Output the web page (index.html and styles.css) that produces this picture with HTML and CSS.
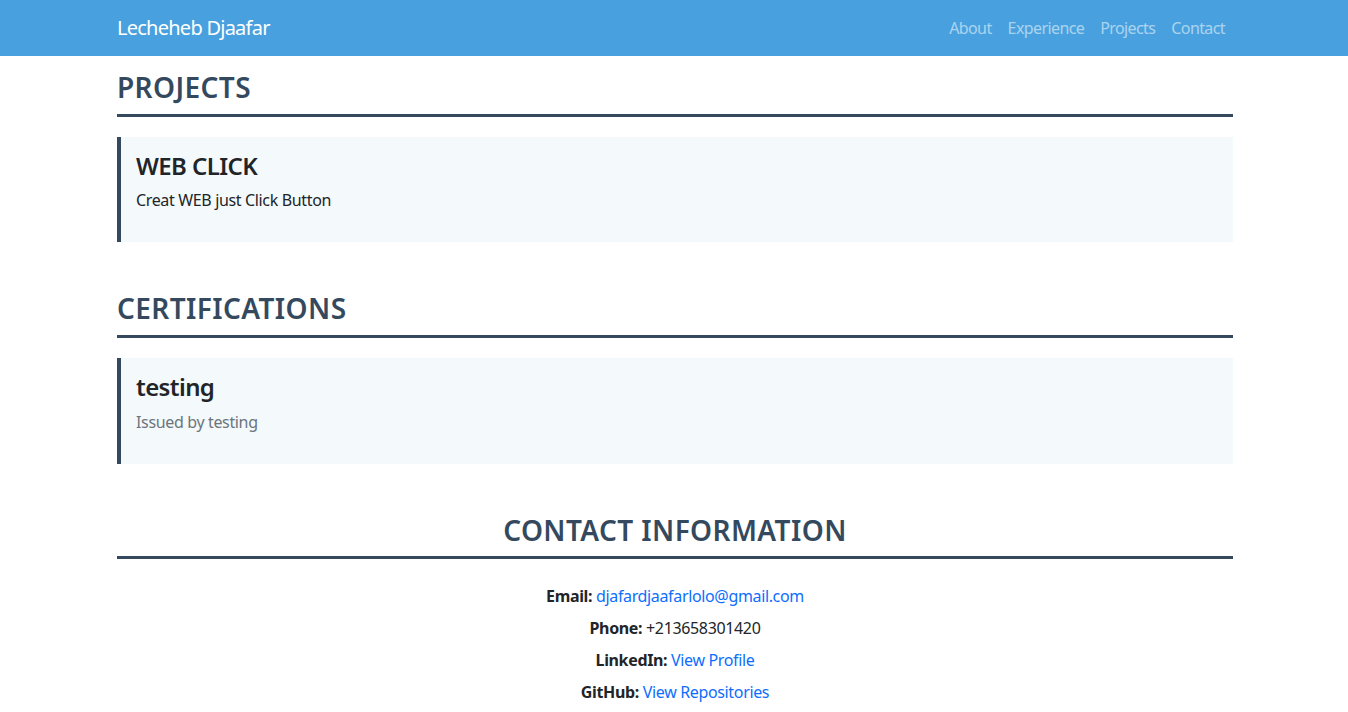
FILE: index.html
```html
<!DOCTYPE html>
<html lang="en">
<head>
<meta charset="utf-8">
<title>Lecheheb Djaafar</title>
<link rel="stylesheet" href="styles.css">
</head>
<body>
<nav class="navbar">
  <div class="container nav-inner">
    <a class="brand" href="#">Lecheheb Djaafar</a>
    <ul class="nav-links">
      <li><a href="#about">About</a></li>
      <li><a href="#experience">Experience</a></li>
      <li><a href="#projects">Projects</a></li>
      <li><a href="#contact">Contact</a></li>
    </ul>
  </div>
</nav>
<main class="container main">
  <section class="section" id="projects">
    <h2 class="section-title">Projects</h2>
    <div class="card">
      <h3 class="card-title">WEB CLICK</h3>
      <p class="card-text">Creat WEB just Click Button</p>
    </div>
  </section>
  <section class="section" id="certifications">
    <h2 class="section-title">Certifications</h2>
    <div class="card">
      <h3 class="card-title">testing</h3>
      <p class="card-text muted">Issued by testing</p>
    </div>
  </section>
  <section class="section contact" id="contact">
    <h2 class="section-title center">Contact Information</h2>
    <p class="contact-line"><strong>Email:</strong> <a href="#">djafardjaafarlolo@gmail.com</a></p>
    <p class="contact-line"><strong>Phone:</strong> +213658301420</p>
    <p class="contact-line"><strong>LinkedIn:</strong> <a href="#">View Profile</a></p>
    <p class="contact-line"><strong>GitHub:</strong> <a href="#">View Repositories</a></p>
  </section>
</main>
</body>
</html>
```
FILE: styles.css
```css
* { box-sizing: border-box; }
html, body { margin: 0; padding: 0; }
body {
  font-family: "Noto Sans", "Open Sans", sans-serif;
  font-size: 16px;
  line-height: 1.5;
  letter-spacing: -0.35px;
  color: #212529;
  background: #fff;
}
.container {
  width: 1140px;
  margin: 0 auto;
  padding: 0 11px 0 13px;
}
.navbar {
  background: #48a1de;
  height: 56px;
}
.nav-inner {
  display: flex;
  align-items: center;
  justify-content: space-between;
  height: 56px;
}
.brand {
  color: #fff;
  text-decoration: none;
  font-size: 20px;
  line-height: 30px;
  letter-spacing: -0.75px;
}
.nav-links {
  display: flex;
  list-style: none;
  margin: 0;
  padding: 0;
}
.nav-links a {
  display: block;
  padding: 8px;
  color: rgba(255,255,255,0.55);
  text-decoration: none;
  font-size: 16px;
  letter-spacing: -0.6px;
}
.main { padding-top: 15px; }
.section { padding-bottom: 50px; }
.section-title {
  font-size: 28px;
  font-weight: 600;
  line-height: 1.2;
  color: #34495e;
  text-transform: uppercase;
  letter-spacing: 0.4px;
  margin: 0 0 20px;
  padding-bottom: 9px;
  border-bottom: 3px solid #34495e;
}
.section-title.center { text-align: center; margin-bottom: 25px; }
.card {
  background: #f4f9fc;
  border-left: 4px solid #34495e;
  padding: 15px 15px 14px;
}
.card-title {
  font-size: 24px;
  font-weight: 600;
  line-height: 1.2;
  letter-spacing: -0.6px;
  margin: 0 0 8px;
}
.card-text { margin: 0 0 16px; }
.muted { color: #6c757d; }
.contact { text-align: center; }
.contact-line { margin: 0 0 8px; }
.contact-line strong { font-weight: 700; }
.contact-line a { color: #0d6efd; text-decoration: none; }
```
